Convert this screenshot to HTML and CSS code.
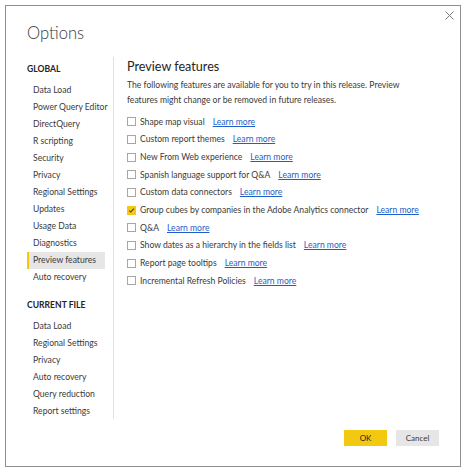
FILE: index.html
```html
<!DOCTYPE html>
<html lang="en">
<head>
  <meta charset="UTF-8">
  <title>Options</title>
  <link rel="stylesheet" href="styles.css">
</head>
<body>
  <div class="dialog">
    <!-- Title bar -->
    <header class="dialog-header">
      <h1 class="dialog-title">Options</h1>
      <button class="close-button" aria-label="Close">
        <svg width="9" height="9" viewBox="0 0 9 9" fill="none" stroke="currentColor" stroke-width="1">
          <line x1="0.5" y1="0.5" x2="8.5" y2="8.5"></line>
          <line x1="8.5" y1="0.5" x2="0.5" y2="8.5"></line>
        </svg>
      </button>
    </header>

    <div class="dialog-body">
      <!-- Left navigation -->
      <nav class="sidebar">
        <div class="nav-heading">GLOBAL</div>
        <a class="nav-item">Data Load</a>
        <a class="nav-item">Power Query Editor</a>
        <a class="nav-item">DirectQuery</a>
        <a class="nav-item">R scripting</a>
        <a class="nav-item">Security</a>
        <a class="nav-item">Privacy</a>
        <a class="nav-item">Regional Settings</a>
        <a class="nav-item">Updates</a>
        <a class="nav-item">Usage Data</a>
        <a class="nav-item">Diagnostics</a>
        <a class="nav-item active">Preview features</a>
        <a class="nav-item">Auto recovery</a>

        <div class="nav-heading section">CURRENT FILE</div>
        <a class="nav-item">Data Load</a>
        <a class="nav-item">Regional Settings</a>
        <a class="nav-item">Privacy</a>
        <a class="nav-item">Auto recovery</a>
        <a class="nav-item">Query reduction</a>
        <a class="nav-item">Report settings</a>
      </nav>

      <!-- Preview features pane -->
      <section class="pane">
        <h2 class="pane-title">Preview features</h2>
        <p class="pane-desc">The following features are available for you to try in this release. Preview<br>features might change or be removed in future releases.</p>

        <ul class="feature-list">
          <li class="feature"><span class="checkbox"></span>Shape map visual<a class="learn-more">Learn more</a></li>
          <li class="feature"><span class="checkbox"></span>Custom report themes<a class="learn-more">Learn more</a></li>
          <li class="feature"><span class="checkbox"></span>New From Web experience<a class="learn-more">Learn more</a></li>
          <li class="feature"><span class="checkbox"></span>Spanish language support for Q&amp;A<a class="learn-more">Learn more</a></li>
          <li class="feature"><span class="checkbox"></span>Custom data connectors<a class="learn-more">Learn more</a></li>
          <li class="feature">
            <span class="checkbox checked">
              <svg width="9" height="9" viewBox="0 0 9 9" fill="none" stroke="#3b3a39" stroke-width="1.3">
                <polyline points="1.6,4.6 3.6,6.6 7.6,2"></polyline>
              </svg>
            </span>Group cubes by companies in the Adobe Analytics connector<a class="learn-more">Learn more</a>
          </li>
          <li class="feature"><span class="checkbox"></span>Q&amp;A<a class="learn-more">Learn more</a></li>
          <li class="feature"><span class="checkbox"></span>Show dates as a hierarchy in the fields list<a class="learn-more">Learn more</a></li>
          <li class="feature"><span class="checkbox"></span>Report page tooltips<a class="learn-more">Learn more</a></li>
          <li class="feature"><span class="checkbox"></span>Incremental Refresh Policies<a class="learn-more">Learn more</a></li>
        </ul>
      </section>
    </div>

    <!-- Footer buttons -->
    <footer class="dialog-footer">
      <button class="btn btn-primary">OK</button>
      <button class="btn">Cancel</button>
    </footer>
  </div>
</body>
</html>
```

FILE: styles.css
```css
/* Reset and base styles */
* {
  margin: 0;
  padding: 0;
  box-sizing: border-box;
}

body {
  background-color: #ffffff;
  color: #3b3a39;
  font-family: 'Lato', 'Open Sans', sans-serif;
  font-size: 8.6px;
}

a {
  color: inherit;
  text-decoration: none;
}

/* Dialog frame */
.dialog {
  margin: 5px;
  width: 456px;
  height: 462px;
  border: 1px solid #8f8f8f;
  display: flex;
  flex-direction: column;
}

.dialog-header {
  flex-shrink: 0;
  height: 51px;
  display: flex;
  justify-content: space-between;
  align-items: flex-start;
  padding: 0 4px 0 21px;
}

.dialog-title {
  font-weight: 300;
  font-size: 16.6px;
  line-height: 22px;
  margin-top: 16px;
  color: #3b3a39;
}

.close-button {
  background: none;
  border: none;
  color: #7a7a7a;
  margin-top: 3px;
  width: 13px;
  height: 13px;
  display: flex;
  align-items: center;
  justify-content: center;
}

/* Body: sidebar + pane */
.dialog-body {
  flex: 1;
  min-height: 0;
  display: flex;
  white-space: nowrap;
}

.sidebar {
  width: 108px;
  padding: 4px 8px 0 21px;
  border-right: 1px solid #e1e1e1;
  display: flex;
  flex-direction: column;
}

.nav-heading {
  font-weight: 700;
  color: #252423;
  line-height: 17px;
  margin-bottom: 4px;
}

.nav-heading.section {
  margin-top: 11px;
}

.nav-item {
  line-height: 17px;
  padding-left: 4px;
  border-left: 2px solid transparent;
}

.nav-item.active {
  background-color: #e6e6e6;
  border-left-color: #f2c811;
}

.pane {
  flex: 1;
  padding: 1px 0 0 13px;
}

.pane-title {
  font-weight: 400;
  font-size: 12.6px;
  line-height: 18px;
  color: #252423;
  margin-bottom: 2px;
}

.pane-desc {
  line-height: 15.4px;
  margin-bottom: 4px;
}

.feature-list {
  list-style: none;
}

.feature {
  display: flex;
  align-items: center;
  height: 17.7px;
}

.checkbox {
  width: 9px;
  height: 9px;
  border: 1px solid #a6a6a6;
  margin-right: 4px;
  display: flex;
  align-items: center;
  justify-content: center;
}

.checkbox.checked {
  background-color: #f2c811;
  border-color: #f2c811;
}

.learn-more {
  color: #1e5ec8;
  text-decoration: underline;
  margin-left: 8px;
}

/* Footer */
.dialog-footer {
  flex-shrink: 0;
  height: 47px;
  display: flex;
  justify-content: flex-end;
  gap: 9px;
  padding: 11px 21px 0 0;
}

.btn {
  width: 43px;
  height: 16px;
  border: none;
  background-color: #e6e6e6;
  color: #3b3a39;
  font-family: inherit;
  font-size: 8px;
}

.btn-primary {
  background-color: #f2c811;
  color: #252423;
}
```
